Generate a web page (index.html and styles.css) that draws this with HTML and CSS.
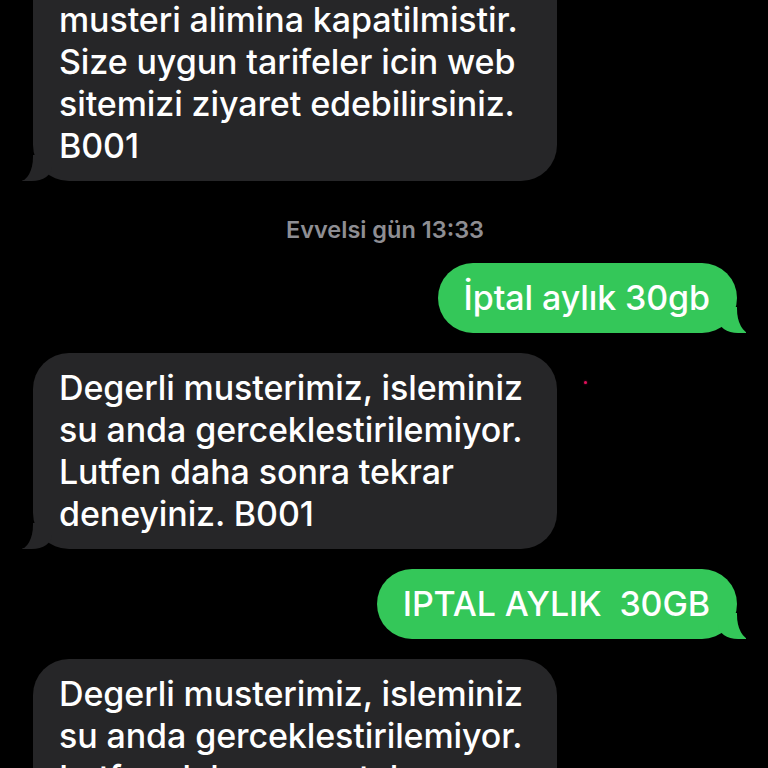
FILE: index.html
```html
<!DOCTYPE html>
<html lang="tr">
<head>
<meta charset="utf-8">
<link rel="stylesheet" href="styles.css">
</head>
<body>
<div class="chat">
  <div class="msg in first">musteri alimina kapatilmistir.<br>Size uygun tarifeler icin web<br>sitemizi ziyaret edebilirsiniz.<br>B001</div>
  <div class="stamp">Evvelsi gün 13:33</div>
  <div class="msg out">İptal aylık 30gb</div>
  <div class="msg in">Degerli musterimiz, isleminiz<br>su anda gerceklestirilemiyor.<br>Lutfen daha sonra tekrar<br>deneyiniz. B001</div>
  <div class="msg out">IPTAL AYLIK&nbsp; 30GB</div>
  <div class="msg in">Degerli musterimiz, isleminiz<br>su anda gerceklestirilemiyor.<br>Lutfen daha sonra tekrar<br>deneyiniz. B001</div>
</div>
<span class="dot"></span>
</body>
</html>
```
FILE: styles.css
```css
html, body {
  margin: 0;
  padding: 0;
  background: #000;
  height: 768px;
  overflow: hidden;
}
body {
  position: relative;
  font-family: Inter, "Noto Sans", sans-serif;
}
.chat {
  display: flex;
  flex-direction: column;
  gap: 20px;
  padding: 0 31px 0 33px;
}
.msg {
  position: relative;
  box-sizing: border-box;
  padding: 14px 26px;
  border-radius: 36px;
  font-size: 34px;
  font-weight: 500;
  letter-spacing: -0.1px;
  line-height: 42px;
  color: #fff;
  white-space: nowrap;
}
.msg.in {
  align-self: flex-start;
  width: 524px;
  background: #262628;
}
.msg.out {
  align-self: flex-end;
  background: #34c759;
  padding-right: 27px;
  padding-left: 26px;
}
.msg.first {
  margin-top: -60px;
  padding-top: 59px;
  border-top-left-radius: 0;
  border-top-right-radius: 0;
}
.msg.in::before {
  content: "";
  position: absolute;
  bottom: 0;
  left: -11px;
  width: 30px;
  height: 26px;
  background: #262628;
  border-bottom-right-radius: 20px 14px;
}
.msg.in::after {
  content: "";
  position: absolute;
  bottom: 0;
  left: -24px;
  width: 24px;
  height: 28px;
  background: #000;
  border-bottom-right-radius: 13px 24px;
}
.msg.out::before {
  content: "";
  position: absolute;
  bottom: 0;
  right: -9px;
  width: 28px;
  height: 26px;
  background: #34c759;
  border-bottom-left-radius: 20px 14px;
}
.msg.out::after {
  content: "";
  position: absolute;
  bottom: 0;
  right: -22px;
  width: 22px;
  height: 28px;
  background: #000;
  border-bottom-left-radius: 13px 24px;
}
.stamp {
  margin-top: 17px;
  margin-bottom: 1px;
  text-align: center;
  color: #8e8e93;
  font-size: 23.5px;
  font-weight: 600;
  line-height: 24px;
}
.dot {
  position: absolute;
  left: 584px;
  top: 381px;
  width: 3px;
  height: 3px;
  border-radius: 50%;
  background: #e0105a;
  box-shadow: 0 0 2px #a00040;
}
```
